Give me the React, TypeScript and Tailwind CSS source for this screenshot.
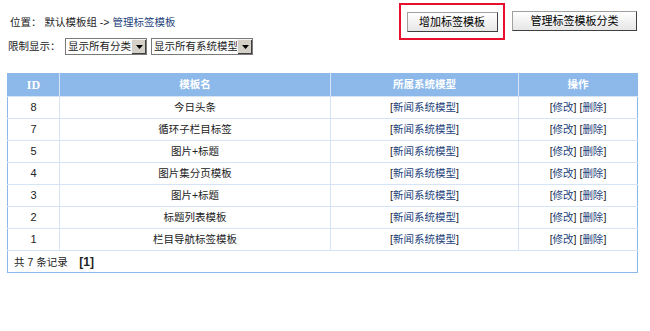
import React from "react";

const rows = [
  { id: 8, name: "今日头条" },
  { id: 7, name: "循环子栏目标签" },
  { id: 5, name: "图片+标题" },
  { id: 4, name: "图片集分页模板" },
  { id: 3, name: "图片+标题" },
  { id: 2, name: "标题列表模板" },
  { id: 1, name: "栏目导航标签模板" },
];

function FakeSelect({ label, width }: { label: string; width: string }) {
  return (
    <div className={`flex h-[17px] items-stretch border border-[#7a7a7a] bg-white ${width}`}>
      <span className="flex-1 pl-[2px] leading-[15px] whitespace-nowrap overflow-hidden">{label}</span>
      <span className="flex w-[15px] items-center justify-center border-l border-t border-[#f4f4f4] bg-[#d4d0c8] shadow-[inset_-1px_-1px_0_#404040]">
        <svg width="7" height="4" viewBox="0 0 7 4">
          <path d="M0 0h7L3.5 4z" fill="#000" />
        </svg>
      </span>
    </div>
  );
}

function Btn({ children, width }: { children: React.ReactNode; width: string }) {
  return (
    <button
      className={`h-[20px] ${width} border border-[#a0a0a0] border-r-[#404040] border-b-[#404040] bg-gradient-to-b from-white to-[#e6e6e6] text-[11px] text-black leading-[18px]`}
    >
      {children}
    </button>
  );
}

export default function App() {
  return (
    <div className="w-[650px] h-[331px] bg-white text-[10.5px] text-[#222] font-['Liberation_Sans','Noto_Sans_CJK_SC',sans-serif]">
      <div className="flex items-start pt-[3px]">
        <div className="pl-[10px] pt-[12px] flex-1">
          位置： 默认模板组 -&gt; <span className="text-[#1d3f7a]">管理标签模板</span>
        </div>
        <div className="flex items-start mr-[13px]">
          <div className="border-2 border-[#e8112d] w-[106px] h-[37px] flex items-center justify-center">
            <Btn width="w-[91px]">增加标签模板</Btn>
          </div>
          <div className="ml-[7px] pt-[8px]">
            <Btn width="w-[125px]">管理标签模板分类</Btn>
          </div>
        </div>
      </div>

      <div className="flex items-center pl-[8px] mt-[-2px] h-[17px]">
        <span className="w-[56px]">限制显示：</span>
        <FakeSelect label="显示所有分类" width="w-[82px] ml-[1px]" />
        <FakeSelect label="显示所有系统模型" width="w-[102px] ml-[4px]" />
      </div>

      <table className="ml-[7px] mt-[18px] w-[630px] border-collapse border border-[#8db9ea] table-fixed">
        <colgroup>
          <col className="w-[52px]" />
          <col className="w-[271px]" />
          <col className="w-[188px]" />
          <col className="w-[119px]" />
        </colgroup>
        <thead>
          <tr className="h-[23px] bg-[#8db9ea] text-white font-bold">
            <th className="border border-[#d5e5f7] border-t-[#8db9ea] border-l-[#8db9ea] font-['Liberation_Serif',serif] text-[12px]">ID</th>
            <th className="border border-[#d5e5f7] border-t-[#8db9ea]">模板名</th>
            <th className="border border-[#d5e5f7] border-t-[#8db9ea]">所属系统模型</th>
            <th className="border border-[#d5e5f7] border-t-[#8db9ea] border-r-[#8db9ea]">操作</th>
          </tr>
        </thead>
        <tbody>
          {rows.map((r) => (
            <tr key={r.id} className="h-[22px] text-center">
              <td className="border border-[#d5e5f7] border-l-[#8db9ea] text-[11px]">{r.id}</td>
              <td className="border border-[#d5e5f7]">{r.name}</td>
              <td className="border border-[#d5e5f7]">
                [<span className="text-[#1d3f7a]">新闻系统模型</span>]
              </td>
              <td className="border border-[#d5e5f7] border-r-[#8db9ea]">
                [<span className="text-[#1d3f7a]">修改</span>] [<span className="text-[#1d3f7a]">删除</span>]
              </td>
            </tr>
          ))}
          <tr className="h-[22px]">
            <td colSpan={4} className="pl-[6px] border border-[#8db9ea] border-t-[#d5e5f7]">
              共 7 条记录 &nbsp;&nbsp; <b className="text-[12px]">[1]</b>
            </td>
          </tr>
        </tbody>
      </table>
    </div>
  );
}
